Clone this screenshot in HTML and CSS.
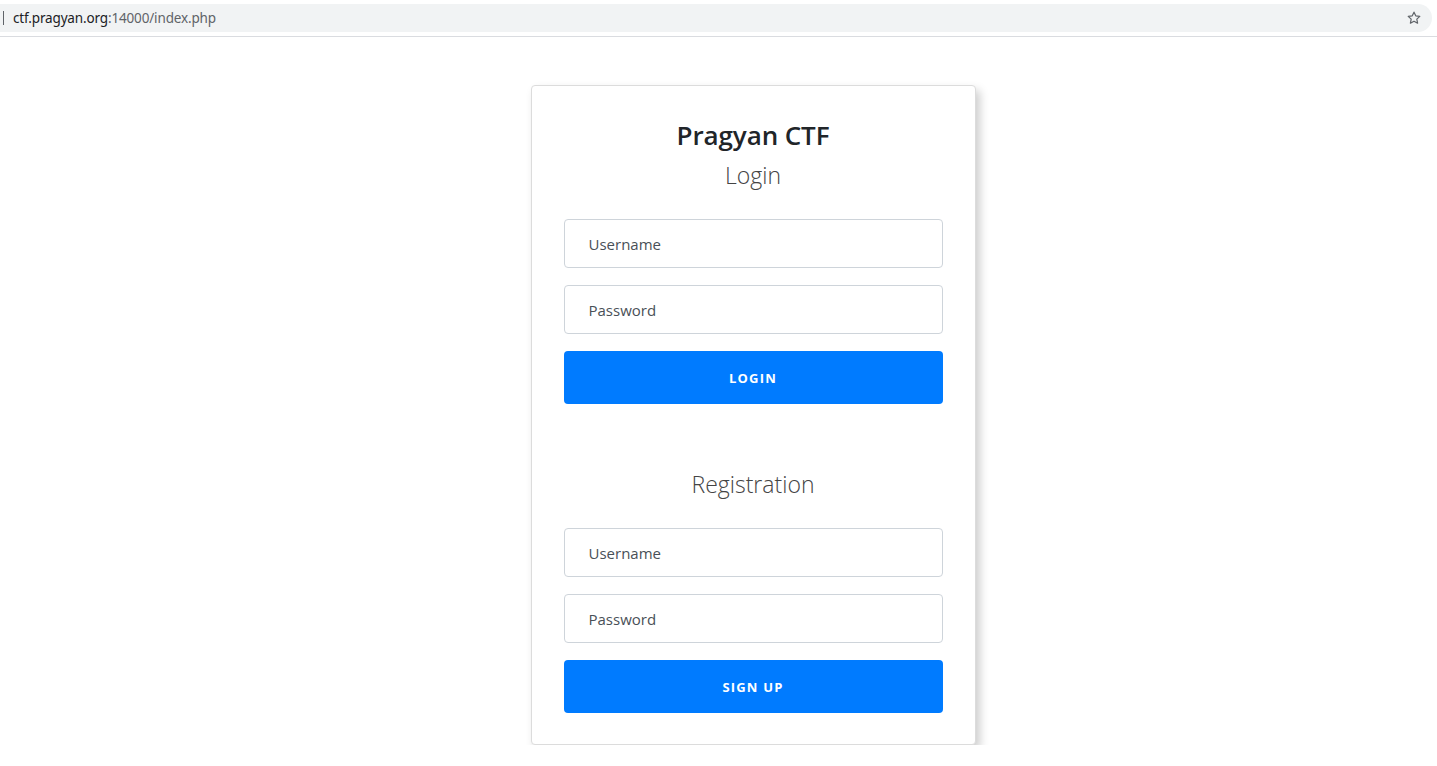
FILE: index.html
```html
<!DOCTYPE html>
<html>
<head>
<meta charset="utf-8">
<title>Pragyan CTF</title>
<link rel="stylesheet" href="styles.css">
</head>
<body>
<div class="browserbar">
  <div class="omnibox">
    <span class="caret"></span>
    <span class="url"><span class="host">ctf.pragyan.org</span>:14000/index.php</span>
    <svg class="star" width="16" height="16" viewBox="0 0 24 24"><path d="M12 3.2l2.6 5.6 6.1.7-4.5 4.2 1.2 6.1L12 16.8l-5.4 3 1.2-6.1-4.5-4.2 6.1-.7z" fill="none" stroke="#5f6368" stroke-width="1.8" stroke-linejoin="round"/></svg>
  </div>
</div>
<main class="page">
  <div class="card">
    <h1 class="title">Pragyan CTF</h1>
    <h2 class="subtitle">Login</h2>
    <form class="form">
      <input class="field" type="text" placeholder="Username">
      <input class="field" type="password" placeholder="Password">
      <button class="btn" type="button">LOGIN</button>
    </form>
    <h2 class="subtitle reg">Registration</h2>
    <form class="form">
      <input class="field" type="text" placeholder="Username">
      <input class="field" type="password" placeholder="Password">
      <button class="btn" type="button">SIGN UP</button>
    </form>
  </div>
</main>
</body>
</html>
```
FILE: styles.css
```css
* { box-sizing: border-box; }
html, body { margin: 0; padding: 0; background: #fff; }
body { font-family: "Open Sans", "Noto Sans", sans-serif; color: #212529; }

.browserbar {
  height: 37px;
  border-bottom: 1px solid #dadce0;
  padding: 4px 5px 0 0;
}
.omnibox {
  height: 28px;
  background: #f1f3f4;
  border-radius: 0 14px 14px 0;
  display: flex;
  align-items: center;
  padding: 0 10px 0 3px;
}
.caret { width: 1px; height: 14px; background: #5f6368; margin-right: 9px; }
.url { font-family: "Noto Sans", "Open Sans", sans-serif; font-size: 13.5px; color: #5f6368; flex: 1; letter-spacing: -0.15px; }
.host { color: #202124; }
.star { display: block; }

.page { display: flex; justify-content: center; padding-top: 48px; padding-left: 69px; }
.card {
  width: 445px;
  border: 1px solid #dcdcdc;
  border-radius: 4px;
  box-shadow: 4px 5px 10px rgba(0,0,0,0.2);
  padding: 31px 32px 31px;
  background: #fff;
}
.title {
  margin: 0;
  text-align: center;
  font-size: 26px;
  font-weight: 600;
  line-height: 37px;
  color: #212529;
  letter-spacing: -0.1px;
}
.subtitle {
  margin: 0;
  text-align: center;
  font-size: 23px;
  font-weight: 300;
  line-height: 36px;
  color: #444;
}
.title + .subtitle { margin-top: 3px; }
.reg { margin-top: 62px; }
.form { display: flex; flex-direction: column; gap: 17px; margin-top: 26px; }
.field {
  height: 49px;
  border: 1px solid #ced4da;
  border-radius: 4px;
  padding: 0 24px;
  font-family: inherit;
  font-size: 15px;
  color: #495057;
  outline: none;
}
.field::placeholder { color: #495057; }
.btn {
  height: 53px;
  border: none;
  border-radius: 4px;
  background: #007bff;
  color: #fff;
  font-family: inherit;
  font-size: 13px;
  font-weight: 700;
  letter-spacing: 1.2px;
}
```
